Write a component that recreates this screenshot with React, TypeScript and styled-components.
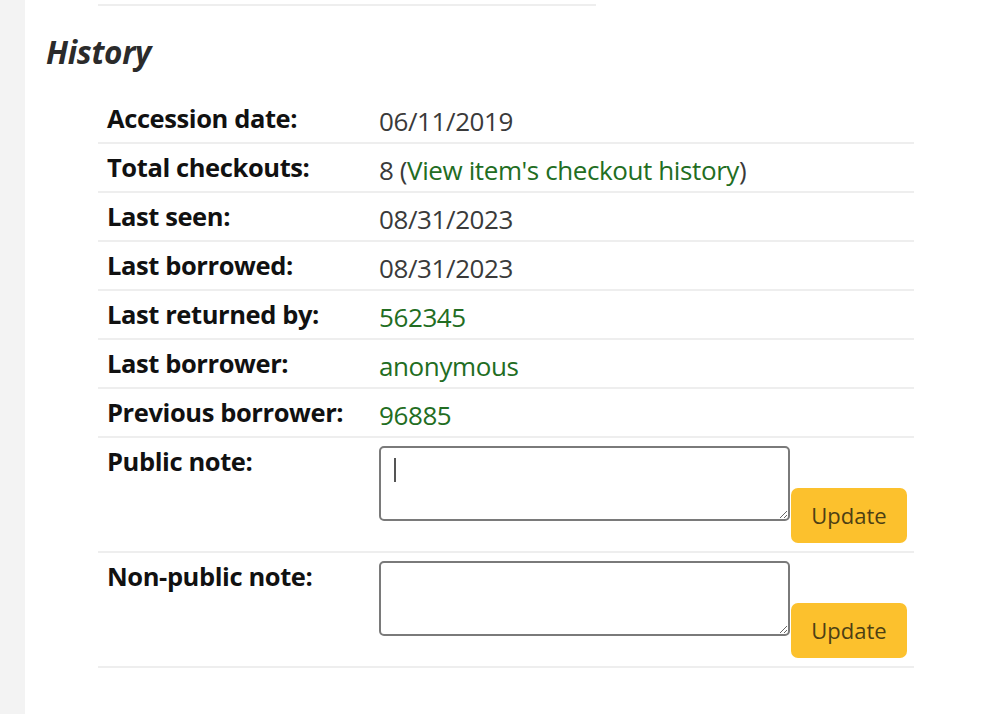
import React from "react";
import styled, { createGlobalStyle } from "styled-components";

const Global = createGlobalStyle`
  html, body { margin: 0; padding: 0; background: #fff; }
  body { font-family: "Open Sans", "Noto Sans", sans-serif; }
`;

const Page = styled.div`
  display: flex;
  min-height: 714px;
  width: 1000px;
`;

const Gutter = styled.div`
  width: 25px;
  flex: 0 0 25px;
  background: #f3f3f3;
`;

const Main = styled.main`
  flex: 1;
  padding-left: 21px;
`;

const TopRule = styled.div`
  margin: 4px 0 0 52px;
  width: 498px;
  height: 2px;
  background: #eeeeee;
`;

const Heading = styled.h3`
  margin: 26px 0 0 0;
  font-size: 31.5px;
  line-height: 40px;
  font-style: italic;
  font-weight: 700;
  color: #2b2b2b;
  letter-spacing: -0.3px;
`;

const Table = styled.div`
  margin: 23px 0 0 52px;
  width: 816px;
  display: grid;
  grid-template-columns: 272px 1fr;
`;

const Label = styled.div`
  padding: 5px 9px 0 9px;
  height: 42px;
  box-sizing: content-box;
  font-size: 25.5px;
  line-height: 36px;
  font-weight: 700;
  color: #111;
  letter-spacing: -0.4px;
  white-space: nowrap;
  border-bottom: 2px solid #eeeeee;
`;

const Value = styled.div`
  padding: 8px 9px 0 9px;
  height: 39px;
  font-size: 26px;
  line-height: 36px;
  color: #3a3a3a;
  letter-spacing: -0.4px;
  white-space: nowrap;
  border-bottom: 2px solid #eeeeee;
`;

const NoteLabel = styled(Label)`
  height: auto;
  padding-bottom: 8px;
`;

const NoteCell = styled.div`
  padding: 8px 7px 8px 9px;
  display: flex;
  align-items: flex-end;
  gap: 1px;
  border-bottom: 2px solid #eeeeee;
`;

const AreaWrap = styled.div`
  position: relative;
  align-self: flex-start;
  margin-bottom: 22px;
`;

const NoteArea = styled.textarea`
  display: block;
  width: 411px;
  height: 75px;
  box-sizing: border-box;
  border: 2px solid #7a7a7a;
  border-radius: 5px;
  resize: both;
  font-family: inherit;
  font-size: 20px;
  outline: none;
`;

const Caret = styled.span`
  position: absolute;
  left: 15px;
  top: 12px;
  width: 2px;
  height: 24px;
  background: #555;
`;

const Link = styled.a`
  color: #226d22;
  text-decoration: none;
`;

const Button = styled.button`
  width: 116px;
  height: 55px;
  border: none;
  border-radius: 7px;
  background: #fcc12d;
  color: #4d3f14;
  font-family: inherit;
  font-size: 22px;
  padding: 0;
  line-height: 55px;
  cursor: pointer;
`;

const rows: { label: string; value: React.ReactNode }[] = [
  { label: "Accession date:", value: "06/11/2019" },
  {
    label: "Total checkouts:",
    value: (
      <>
        8 (<Link href="#">View item's checkout history</Link>)
      </>
    ),
  },
  { label: "Last seen:", value: "08/31/2023" },
  { label: "Last borrowed:", value: "08/31/2023" },
  { label: "Last returned by:", value: <Link href="#">562345</Link> },
  { label: "Last borrower:", value: <Link href="#">anonymous</Link> },
  { label: "Previous borrower:", value: <Link href="#">96885</Link> },
];

export default function App() {
  return (
    <>
      <Global />
      <Page>
        <Gutter />
        <Main>
          <TopRule />
          <Heading>History</Heading>
          <Table>
            {rows.map((r) => (
              <React.Fragment key={r.label}>
                <Label>{r.label}</Label>
                <Value>{r.value}</Value>
              </React.Fragment>
            ))}
            <NoteLabel>Public note:</NoteLabel>
            <NoteCell>
              <AreaWrap>
                <NoteArea />
                <Caret />
              </AreaWrap>
              <Button>Update</Button>
            </NoteCell>
            <NoteLabel>Non-public note:</NoteLabel>
            <NoteCell>
              <AreaWrap>
                <NoteArea />
              </AreaWrap>
              <Button>Update</Button>
            </NoteCell>
          </Table>
        </Main>
      </Page>
    </>
  );
}
